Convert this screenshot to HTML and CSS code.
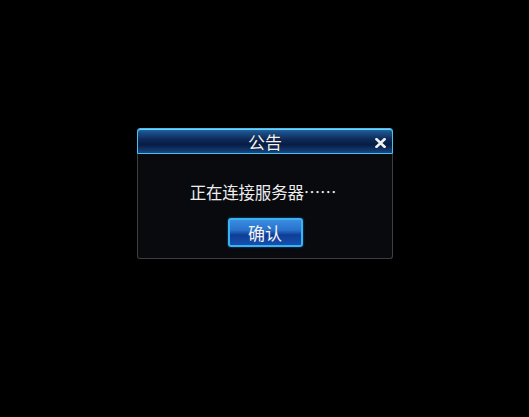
FILE: index.html
```html
<!DOCTYPE html>
<html lang="zh">
<head>
<meta charset="utf-8">
<title>公告</title>
<link rel="stylesheet" href="styles.css">
</head>
<body>
<div class="dialog">
  <div class="titlebar">
    <span class="title">公告</span>
    <svg class="close" width="11" height="10" viewBox="0 0 11 10" aria-label="关闭">
      <path d="M1.5 1.2 L9.5 8.8 M9.5 1.2 L1.5 8.8" stroke="#f2f2f2" stroke-width="2.6" stroke-linecap="square" fill="none"/>
    </svg>
  </div>
  <div class="content">
    <p class="message">正在连接服务器……</p>
    <button class="ok">确认</button>
  </div>
</div>
</body>
</html>
```

FILE: styles.css
```css
html, body {
  margin: 0;
  padding: 0;
  background: #000;
  height: 100%;
}
body {
  font-family: "Noto Sans CJK SC", "Noto Sans", sans-serif;
  padding: 128px 0 0 137px;
  box-sizing: border-box;
}
.dialog {
  width: 256px;
  height: 131px;
  display: flex;
  flex-direction: column;
}
.titlebar {
  position: relative;
  height: 26px;
  box-sizing: border-box;
  border: 1px solid #48bff0;
  border-radius: 3px 3px 0 0;
  background: linear-gradient(to bottom, #2a6aa8 0%, #1a4d86 15%, #0d2857 45%, #081c44 65%, #123a70 90%, #1a4a84 100%);
  box-shadow: inset 0 1px 0 #6cd0f8;
  display: flex;
  align-items: center;
  justify-content: center;
}
.title {
  color: #f4f4f4;
  font-size: 17px;
  line-height: 1;
  text-shadow: 0 0 1px #000;
}
.close {
  position: absolute;
  right: 6px;
  top: 9px;
}
.content {
  flex: 1;
  background: #090a0e;
  border: 1px solid #3c3e44;
  border-top: none;
  border-radius: 0 0 3px 3px;
  display: flex;
  flex-direction: column;
  align-items: center;
}
.message {
  margin: 27px 4px 0 0;
  color: #eeeeee;
  font-size: 16.5px;
  line-height: 22px;
  letter-spacing: -0.2px;
}
.ok {
  margin-top: 15px;
  width: 75px;
  height: 29px;
  box-sizing: border-box;
  border: 2px solid #38b4f0;
  border-radius: 3px;
  background: linear-gradient(to bottom, #3a8ce0 0%, #2a72cc 40%, #0f3d96 60%, #1550b0 100%);
  color: #f4f4f4;
  font-family: "Noto Sans CJK SC", "Noto Sans", sans-serif;
  font-size: 17px;
  line-height: 1;
  padding: 0;
  box-shadow: 0 0 2px #1c6ad0;
}
```
